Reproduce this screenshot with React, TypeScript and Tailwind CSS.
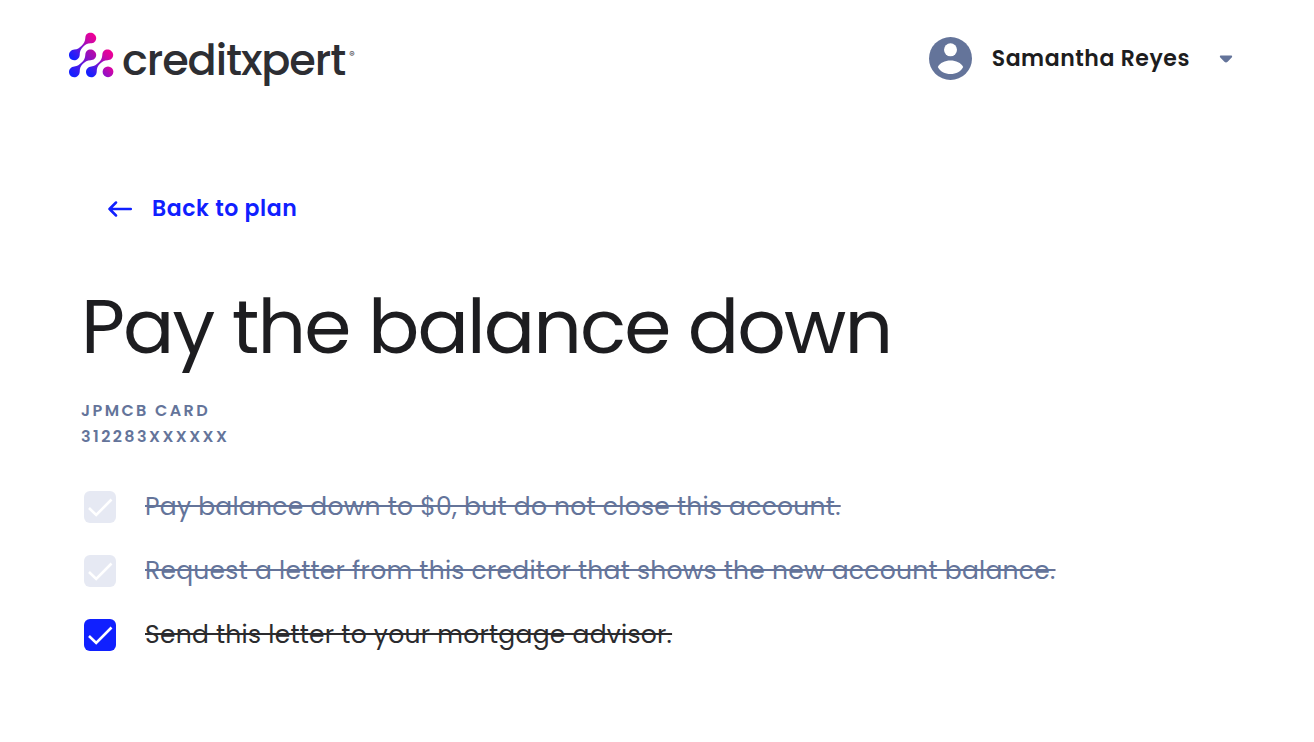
import { useState } from 'react';

type Step = {
  id: string;
  label: string;
  done: boolean;
  locked: boolean;
};

const initialSteps: Step[] = [
  { id: 'pay', label: 'Pay balance down to $0, but do not close this account.', done: true, locked: true },
  { id: 'request', label: 'Request a letter from this creditor that shows the new account balance.', done: true, locked: true },
  { id: 'send', label: 'Send this letter to your mortgage advisor.', done: true, locked: false }
];

// a large drop pulled out towards a second one at the lower left
const LINK = 'M17.8 1.5 C21 -1.4 26.8 0.6 27.2 5.4 C27.2 9 24.6 10.8 21.6 10.8 C18.2 11 16.2 12.2 13.7 14.7 C11.4 17 10.8 19 10.7 22.5 C10.5 25.6 8 27.8 5.1 27.8 C2 27.8 -0.1 25.4 0 22.4 C0.1 19.5 2.4 17.2 5.3 17 C8.6 16.8 10.2 15.6 12.6 13.2 C15 10.8 16.1 9.2 16.3 5.6 C16.4 3.8 16.8 2.5 17.8 1.5 Z';

function LogoMark() {
  return (
    <svg width="46" height="46" viewBox="0 0 46 46" className="mt-1 shrink-0" aria-hidden="true">
      <defs>
        <linearGradient id="link" gradientUnits="userSpaceOnUse" x1="3" y1="25" x2="25" y2="3">
          <stop offset="0" stopColor="#1420ff" />
          <stop offset="0.2" stopColor="#3a1cf0" />
          <stop offset="0.75" stopColor="#c808a8" />
          <stop offset="1" stopColor="#ee0096" />
        </linearGradient>
        <linearGradient id="linkLow" gradientUnits="userSpaceOnUse" x1="3" y1="25" x2="25" y2="3">
          <stop offset="0" stopColor="#1420ff" />
          <stop offset="0.25" stopColor="#3a1cf0" />
          <stop offset="1" stopColor="#b50aab" />
        </linearGradient>
        <linearGradient id="dot" x1="0" y1="1" x2="1" y2="0">
          <stop offset="0" stopColor="#7a14d4" />
          <stop offset="1" stopColor="#ee0096" />
        </linearGradient>
      </defs>
      <path d={LINK} fill="url(#link)" transform="translate(1 0.5)" />
      <path d={LINK} fill="url(#linkLow)" transform="translate(1 17.4)" />
      <path d={LINK} fill="url(#link)" transform="translate(18 17.4)" />
      <circle cx="40" cy="39.8" r="5.4" fill="url(#dot)" />
    </svg>
  );
}

function Avatar() {
  return (
    <svg width="43" height="43" viewBox="0 0 43 43" aria-hidden="true">
      <circle cx="21.5" cy="21.5" r="21.5" fill="#64749a" />
      <circle cx="21.5" cy="12.8" r="6.5" fill="#fff" />
      <path d="M8.8 30 C11 25.6 16 23.4 21.5 23.4 S32 25.6 34.2 30 C32 34.6 27 37 21.5 37 S11 34.6 8.8 30 Z" fill="#fff" />
    </svg>
  );
}

function Header() {
  return (
    <header className="flex items-start justify-between pt-7 pr-[81px] pl-17">
      <a href="#" className="flex items-start gap-2 text-[#2d2e33]">
        <LogoMark />
        <span className="text-[43px] leading-16 font-medium tracking-tight">creditxpert</span>
        <span className="-ml-1 pt-5 font-['Inter'] text-[8px] leading-3">®</span>
      </a>
      <button type="button" className="mt-[9px] flex items-center gap-5 text-[#1d1d20]">
        <Avatar />
        <span className="text-[22px] leading-8 font-semibold tracking-wide">Samantha Reyes</span>
        <svg width="14" height="8" viewBox="0 0 14 8" className="ml-[9px]" aria-hidden="true">
          <path d="M2 0.5 H12 C13.2 0.5 13.5 1.7 12.7 2.5 L8.6 6.8 Q7 8.3 5.4 6.8 L1.3 2.5 C0.5 1.7 0.8 0.5 2 0.5 Z" fill="#64749a" />
        </svg>
      </button>
    </header>
  );
}

function StepRow({ step, onToggle }: { step: Step; onToggle: (id: string) => void }) {
  return (
    <li className="flex items-center gap-[29px]">
      <span className="grid size-8 shrink-0">
        <input
          id={step.id}
          type="checkbox"
          checked={step.done}
          disabled={step.locked}
          onChange={() => onToggle(step.id)}
          className="col-start-1 row-start-1 size-8 appearance-none rounded-md border border-[#64749a] checked:border-0 checked:bg-[#1020ff] disabled:bg-[#e6e9f3]"
        />
        {step.done && (
          <svg viewBox="0 0 32 32" className="pointer-events-none col-start-1 row-start-1 size-8" fill="none" aria-hidden="true">
            <path d="M5 17 L12.2 24 L27.5 8.5" stroke="#fff" strokeWidth="2.6" />
          </svg>
        )}
      </span>
      <label
        htmlFor={step.id}
        className={`text-[25px] leading-8 tracking-[0.01em] ${step.done ? 'line-through decoration-2' : ''} ${step.locked ? 'text-[#64749a]' : 'text-[#2b2b2e]'}`}
      >
        {step.label}
      </label>
    </li>
  );
}

export default function App() {
  const [steps, setSteps] = useState(initialSteps);

  const toggle = (id: string) => {
    setSteps((prev) => prev.map((step) => (step.id === id ? { ...step, done: !step.done } : step)));
  };

  return (
    <div className="min-h-screen bg-white font-['Poppins','Inter',sans-serif]">
      <Header />
      <main className="px-[81px] pt-[101px] pb-20">
        <a href="#" className="ml-[27px] inline-flex items-center gap-5 text-[22px] leading-8 font-semibold tracking-wide text-[#1020ff]">
          <svg width="24" height="16" viewBox="0 0 24 16" fill="none" stroke="currentColor" strokeWidth="2.5" strokeLinecap="round" strokeLinejoin="round" aria-hidden="true">
            <path d="M22.8 8 H1.5 M8 1.5 L1.5 8 L8 14.5" />
          </svg>
          Back to plan
        </a>
        <h1 className="mt-14 text-[76px] leading-[92px] tracking-tight text-[#1d1d20]">Pay the balance down</h1>
        <p className="mt-[25px] text-[16px] leading-[26px] font-semibold tracking-[0.15em] text-[#64749a]">
          JPMCB CARD
          <br />
          312283XXXXXX
        </p>
        <ul className="mt-[41px] ml-[3px] space-y-8">
          {steps.map((step) => (
            <StepRow key={step.id} step={step} onToggle={toggle} />
          ))}
        </ul>
      </main>
    </div>
  );
}
